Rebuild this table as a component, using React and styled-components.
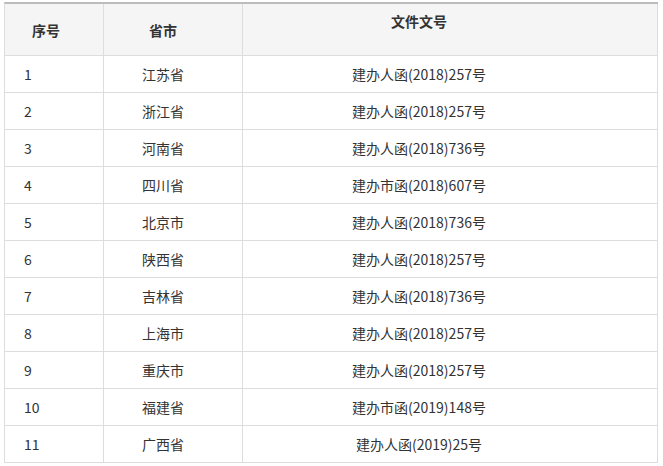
import React from 'react';
import styled, { createGlobalStyle } from 'styled-components';

const GlobalStyle = createGlobalStyle`
  body {
    margin: 0;
    background: #ffffff;
    font-family: "Noto Sans CJK SC", "Liberation Sans", sans-serif;
  }
`;

const Wrapper = styled.div`
  padding: 2px 0 0 4px;
`;

const Table = styled.table`
  width: 654px;
  border-collapse: separate;
  border-spacing: 0;
  border-top: 2px solid #bcbcbc;
  border-left: 1px solid #dddddd;
  table-layout: fixed;
  font-size: 14px;
  color: #333333;
`;

const HeadCell = styled.th`
  height: 52px;
  padding: ${p => p.$pad || '0'};
  background: #f5f5f5;
  border-right: 1px solid #dddddd;
  border-bottom: 1px solid #dddddd;
  font-weight: bold;
  text-align: ${p => p.$align || 'center'};
  vertical-align: ${p => p.$valign || 'middle'};
  line-height: 16px;
  box-sizing: border-box;
`;

const Cell = styled.td`
  height: 37px;
  padding: ${p => p.$pad || '0'};
  border-right: 1px solid #dddddd;
  border-bottom: 1px solid #dddddd;
  text-align: ${p => p.$align || 'center'};
  vertical-align: middle;
  line-height: 16px;
  box-sizing: border-box;
`;

const rows = [
  ['1', '江苏省', '建办人函(2018)257号'],
  ['2', '浙江省', '建办人函(2018)257号'],
  ['3', '河南省', '建办人函(2018)736号'],
  ['4', '四川省', '建办市函(2018)607号'],
  ['5', '北京市', '建办人函(2018)736号'],
  ['6', '陕西省', '建办人函(2018)257号'],
  ['7', '吉林省', '建办人函(2018)736号'],
  ['8', '上海市', '建办人函(2018)257号'],
  ['9', '重庆市', '建办人函(2018)257号'],
  ['10', '福建省', '建办市函(2019)148号'],
  ['11', '广西省', '建办人函(2019)25号'],
];

export default function App() {
  return (
    <Wrapper>
      <GlobalStyle />
      <Table>
        <colgroup>
          <col style={{ width: 99 }} />
          <col style={{ width: 139 }} />
          <col style={{ width: 415 }} />
        </colgroup>
        <thead>
          <tr>
            <HeadCell $align="left" $pad="0 0 0 27px">序号</HeadCell>
            <HeadCell $pad="0 20px 0 0">省市</HeadCell>
            <HeadCell $pad="9px 62px 0 0" $valign="top">文件文号</HeadCell>
          </tr>
        </thead>
        <tbody>
          {rows.map(r => (
            <tr key={r[0]}>
              <Cell $align="left" $pad="0 0 0 19px">{r[0]}</Cell>
              <Cell $pad="0 20px 0 0">{r[1]}</Cell>
              <Cell $pad="0 62px 0 0">{r[2]}</Cell>
            </tr>
          ))}
        </tbody>
      </Table>
    </Wrapper>
  );
}
